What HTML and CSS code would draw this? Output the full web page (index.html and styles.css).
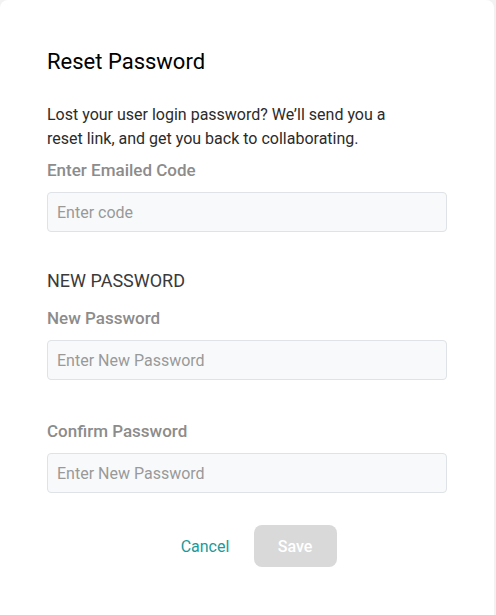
FILE: index.html
```html
<!DOCTYPE html>
<html>
<head>
<meta charset="utf-8">
<link rel="stylesheet" href="styles.css">
</head>
<body>
<div class="card">
  <h1 class="title">Reset Password</h1>
  <p class="intro">Lost your user login password? We’ll send you a<br>reset link, and get you back to collaborating.</p>
  <div class="field field-code">
    <label class="label">Enter Emailed Code</label>
    <input class="input" type="text" placeholder="Enter code">
  </div>
  <h2 class="section">NEW PASSWORD</h2>
  <div class="field field-new">
    <label class="label">New Password</label>
    <input class="input" type="password" placeholder="Enter New Password">
  </div>
  <div class="field field-confirm">
    <label class="label">Confirm Password</label>
    <input class="input" type="password" placeholder="Enter New Password">
  </div>
  <div class="actions">
    <button class="cancel">Cancel</button>
    <button class="save" disabled>Save</button>
  </div>
</div>
</body>
</html>
```
FILE: styles.css
```css
html, body {
  margin: 0;
  padding: 0;
  background: #f2f2f2;
}
body {
  font-family: Roboto, "Liberation Sans", sans-serif;
  width: 496px;
  height: 615px;
  overflow: hidden;
}
.card {
  width: 494px;
  height: 640px;
  background: #fff;
  border-radius: 8px;
  box-sizing: border-box;
  padding: 50px 47px 0 47px;
}
.title {
  margin: 0;
  font-size: 22px;
  font-weight: 400;
  color: #000;
  line-height: 24px;
}
.intro {
  margin: 29px 0 0;
  font-size: 16px;
  line-height: 24px;
  color: #2b2b2b;
}
.field {
  display: flex;
  flex-direction: column;
}
.field-code { margin-top: 7px; }
.field-new { margin-top: 13px; }
.field-confirm { margin-top: 39px; }
.label {
  font-size: 17px;
  font-weight: 500;
  color: #8c8c8c;
  line-height: 24px;
}
.input {
  margin-top: 10px;
  width: 400px;
  height: 40px;
  box-sizing: border-box;
  background: #f8f9fb;
  border: 1px solid #dfe2e6;
  border-radius: 4px;
  padding: 0 9px;
  font-family: inherit;
  font-size: 16px;
  color: #333;
  outline: none;
}
.input::placeholder {
  color: #999;
}
.section {
  margin: 37px 0 0;
  font-size: 18px;
  font-weight: 400;
  color: #3a3a3a;
  line-height: 24px;
}
.actions {
  display: flex;
  justify-content: center;
  align-items: center;
  gap: 7px;
  margin-top: 32px;
  padding-left: 6px;
}
.cancel {
  min-width: 83px;
  height: 42px;
  background: none;
  border: none;
  padding: 0;
  font-family: inherit;
  font-size: 16px;
  color: #1a9a9a;
  cursor: pointer;
}
.save {
  width: 83px;
  height: 42px;
  border: none;
  border-radius: 8px;
  background: #d9d9d9;
  color: #fff;
  font-family: inherit;
  font-size: 16px;
  font-weight: 500;
}
```
